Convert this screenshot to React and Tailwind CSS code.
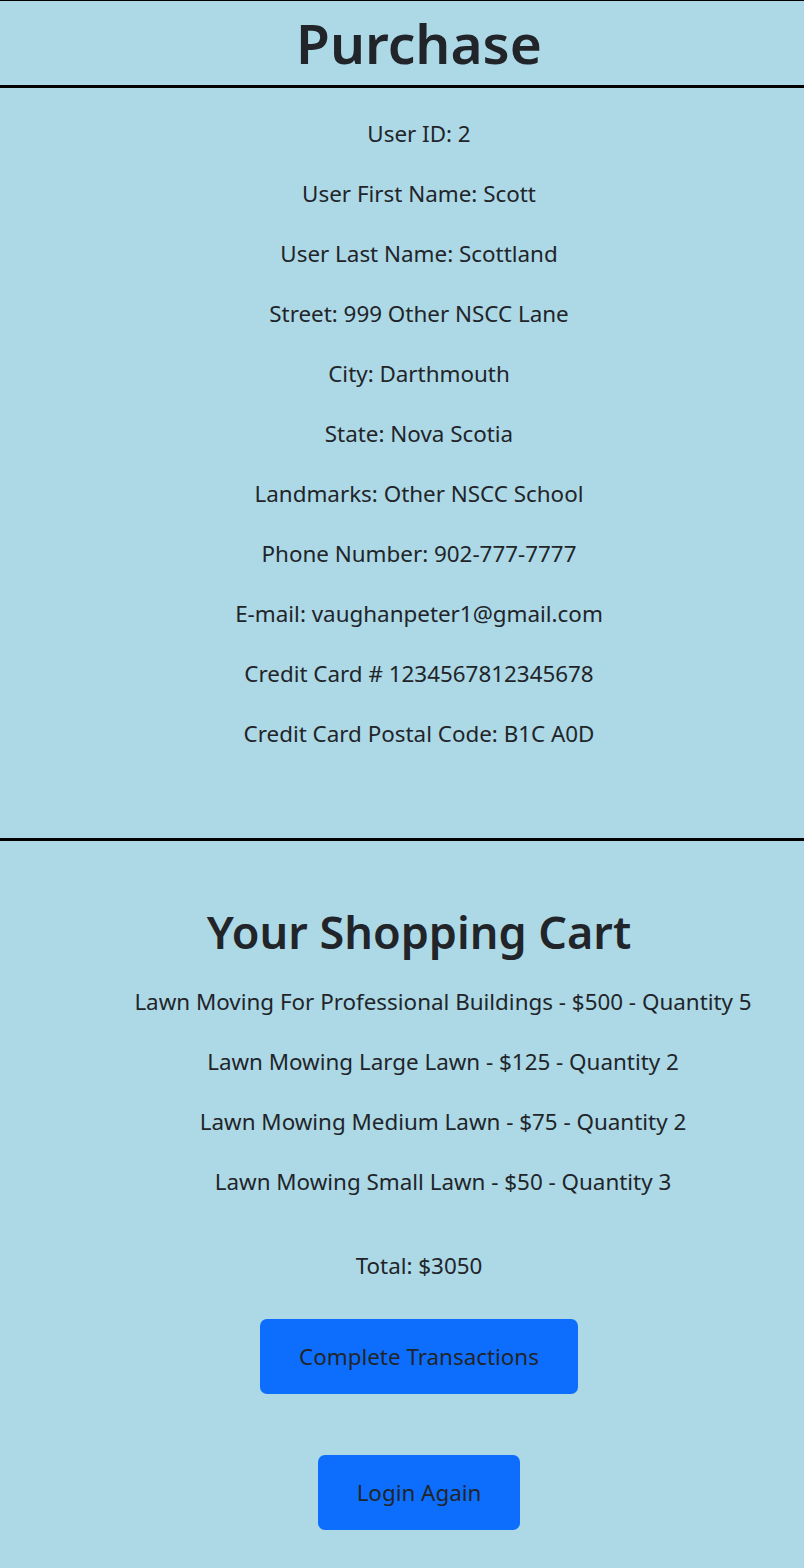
import React from 'react';

const user = [
  'User ID: 2',
  'User First Name: Scott',
  'User Last Name: Scottland',
  'Street: 999 Other NSCC Lane',
  'City: Darthmouth',
  'State: Nova Scotia',
  'Landmarks: Other NSCC School',
  'Phone Number: 902-777-7777',
  'E-mail: vaughanpeter1@gmail.com',
  'Credit Card # 1234567812345678',
  'Credit Card Postal Code: B1C A0D',
];

const cart = [
  'Lawn Moving For Professional Buildings - $500 - Quantity 5',
  'Lawn Mowing Large Lawn - $125 - Quantity 2',
  'Lawn Mowing Medium Lawn - $75 - Quantity 2',
  'Lawn Mowing Small Lawn - $50 - Quantity 3',
];

const App = () => {
  return (
    <div className="min-h-[1568px] bg-[#add8e6] text-[#212529] font-['Noto_Sans',sans-serif]">
      <header className="border-t border-b-[3px] border-black h-[88px] pl-[34px] flex items-center justify-center">
        <h1 className="text-[55px] font-semibold leading-[80px]">Purchase</h1>
      </header>

      <section className="pt-[16px] pb-[74px] pl-[34px] text-center text-[22.4px]">
        {user.map((line) => (
          <p key={line} className="leading-[60px]">{line}</p>
        ))}
      </section>

      <div className="border-t-[3px] border-black" />

      <section className="pt-[62px] pb-[38px] text-center text-[22.4px]">
        <h2 className="pl-[34px] text-[45px] font-semibold leading-[58px]">Your Shopping Cart</h2>
        <ul className="mt-[11px] pl-[82px]">
          {cart.map((item) => (
            <li key={item} className="leading-[60px]">{item}</li>
          ))}
        </ul>
        <div className="pl-[34px] flex flex-col items-center">
          <p className="mt-[39px] leading-[30px]">Total: $3050</p>
          <button className="mt-[38px] h-[75px] px-[39px] rounded-[7px] bg-[#0d6efd] text-[#212529]">
            Complete Transactions
          </button>
          <button className="mt-[61px] h-[75px] px-[39px] rounded-[7px] bg-[#0d6efd] text-[#212529]">
            Login Again
          </button>
        </div>
      </section>
    </div>
  );
};

export default App;
